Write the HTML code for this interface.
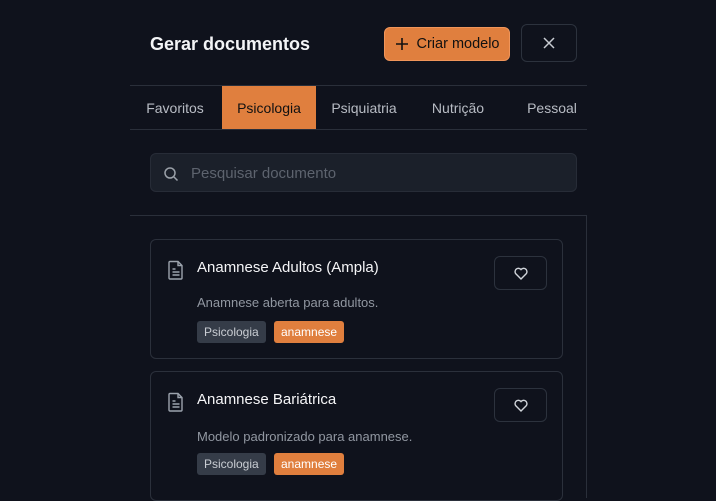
<!DOCTYPE html>
<html><head><style>
*{box-sizing:border-box;margin:0;padding:0}
body{width:716px;height:498px;background:#0f121c;font-family:"Liberation Sans",sans-serif;position:relative;overflow:hidden;color:#fff}
.abs{position:absolute}
.title{left:150px;top:34px;font-size:18px;font-weight:bold;color:#f3f4f6}
.btn{left:384px;top:27px;width:126px;height:34px;background:#e07f3e;border:1px solid #f0955a;border-radius:6px;color:#111;font-size:14.5px;display:flex;align-items:center;justify-content:center;gap:8px}
.close{left:521px;top:24px;width:56px;height:38px;border:1px solid #2c323d;border-radius:6px;display:flex;align-items:center;justify-content:center}
.hl{height:1px;background:#2a2f3a}
.tab{top:86px;height:43px;font-size:14px;color:#b8bcc4;display:flex;align-items:center;justify-content:center}
.search{left:150px;top:153px;width:427px;height:39px;background:#1b202a;border:1px solid #272c37;border-radius:6px;display:flex;align-items:center;padding-left:12px;padding-top:2px;gap:12px;color:#5d636e;font-size:15px}
.card{left:150px;width:413px;border:1px solid #2b303b;border-radius:6px}
.ct{position:absolute;left:46px;top:19px;font-size:15px;color:#f5f5f7}
.cd{position:absolute;left:46px;font-size:13px;color:#9197a1}
.tag{position:absolute;top:0;height:22px;padding:0 7px;border-radius:3px;font-size:12px;display:flex;align-items:center}
.heart{position:absolute;left:343px;top:16px;width:53px;height:34px;border:1px solid #2c323d;border-radius:6px;display:flex;align-items:center;justify-content:center}
.doc{position:absolute;left:16px;top:20px}
</style></head><body>
<div class="abs title">Gerar documentos</div>
<div class="abs btn"><svg width="14" height="14" viewBox="0 0 14 14"><path d="M7 1v12M1 7h12" stroke="#111" stroke-width="1.6"/></svg>Criar modelo</div>
<div class="abs close"><svg width="14" height="14" viewBox="0 0 14 14"><path d="M2 2l10 10M12 2L2 12" stroke="#c8ccd2" stroke-width="1.5"/></svg></div>
<div class="abs hl" style="left:130px;top:85px;width:457px"></div>
<div class="abs tab" style="left:130px;width:90px">Favoritos</div>
<div class="abs tab" style="left:222px;width:94px;background:#e07f3e;color:#111">Psicologia</div>
<div class="abs tab" style="left:316px;width:96px">Psiquiatria</div>
<div class="abs tab" style="left:412px;width:92px">Nutrição</div>
<div class="abs tab" style="left:509px;width:86px">Pessoal</div>
<div class="abs hl" style="left:130px;top:129px;width:457px"></div>
<div class="abs search"><svg width="16" height="16" viewBox="0 0 16 16"><circle cx="7" cy="7" r="5" stroke="#9aa0a8" stroke-width="1.5" fill="none"/><path d="M11 11l3.5 3.5" stroke="#9aa0a8" stroke-width="1.5"/></svg>Pesquisar documento</div>
<div class="abs hl" style="left:130px;top:215px;width:457px"></div>
<div class="abs" style="left:586px;top:215px;width:1px;height:283px;background:#2a2f3a"></div>

<div class="abs card" style="top:239px;height:120px">
<svg class="doc" width="18" height="20" viewBox="0 0 18 20"><path d="M3 1.5h8l4 4v12.5a1 1 0 0 1-1 1H3a1 1 0 0 1-1-1V2.5a1 1 0 0 1 1-1z M11 1.5v4h4 M5.5 9h3 M5.5 12h7 M5.5 15h7" stroke="#9ca3ad" stroke-width="1.4" fill="none"/></svg>
<div class="ct">Anamnese Adultos (Ampla)</div>
<div class="heart"><svg width="14" height="13" viewBox="0 0 14 13"><path d="M7 12L1.8 6.8A3 3 0 0 1 7 2.6a3 3 0 0 1 5.2 4.2z" stroke="#d0d4da" stroke-width="1.4" fill="none"/></svg></div>
<div class="cd" style="top:55px">Anamnese aberta para adultos.</div>
<div style="position:absolute;left:46px;top:81px">
<div class="tag" style="left:0;background:#353c48;color:#c9cdd3">Psicologia</div>
<div class="tag" style="left:77px;background:#e07f3e;color:#fff">anamnese</div></div>
</div>

<div class="abs card" style="top:371px;height:130px">
<svg class="doc" width="18" height="20" viewBox="0 0 18 20"><path d="M3 1.5h8l4 4v12.5a1 1 0 0 1-1 1H3a1 1 0 0 1-1-1V2.5a1 1 0 0 1 1-1z M11 1.5v4h4 M5.5 9h3 M5.5 12h7 M5.5 15h7" stroke="#9ca3ad" stroke-width="1.4" fill="none"/></svg>
<div class="ct">Anamnese Bariátrica</div>
<div class="heart"><svg width="14" height="13" viewBox="0 0 14 13"><path d="M7 12L1.8 6.8A3 3 0 0 1 7 2.6a3 3 0 0 1 5.2 4.2z" stroke="#d0d4da" stroke-width="1.4" fill="none"/></svg></div>
<div class="cd" style="top:57px">Modelo padronizado para anamnese.</div>
<div style="position:absolute;left:46px;top:81px">
<div class="tag" style="left:0;background:#353c48;color:#c9cdd3">Psicologia</div>
<div class="tag" style="left:77px;background:#e07f3e;color:#fff">anamnese</div></div>
</div>
</body></html>
